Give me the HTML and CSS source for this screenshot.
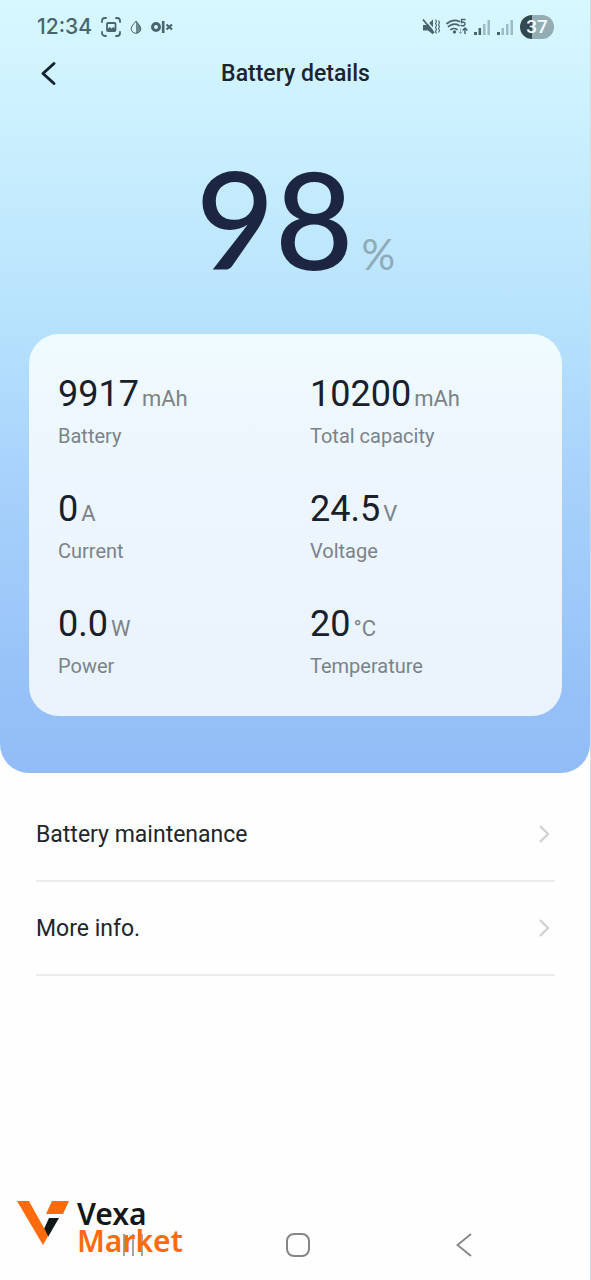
FILE: index.html
```html
<!DOCTYPE html>
<html lang="en">
<head>
<meta charset="utf-8">
<meta name="viewport" content="width=device-width, initial-scale=1">
<title>Battery details</title>
<link rel="stylesheet" href="styles.css">
</head>
<body>
<div class="screen">
  <section class="hero">
    <div class="status">
      <div class="status-group status-left">
        <span class="clock">12:34</span>
        <svg width="20" height="20" viewBox="0 0 20 20" fill="none" stroke="currentColor" stroke-width="1.800" stroke-linecap="round">
          <path d="M1 5V4a3 3 0 0 1 3-3h1M15 1h1a3 3 0 0 1 3 3v1M19 15v1a3 3 0 0 1-3 3h-1M5 19H4a3 3 0 0 1-3-3v-1"/>
          <rect x="6" y="6" width="8.500" height="8" rx="1"/>
          <path d="M6 13l2.500-3 2 1.500L12.500 10l2 2v2H6z" fill="currentColor" stroke="none"/>
        </svg>
        <svg width="12" height="14" viewBox="0 0 12 14">
          <path d="M6 1C8 4 10.800 6 10.800 8.800A4.800 4.500 0 0 1 1.200 8.800C1.200 6 4 4 6 1z" fill="none" stroke="currentColor" stroke-width="1"/>
          <path d="M6 1C8 4 10.800 6 10.800 8.800A4.800 4.500 0 0 1 6 13.300z" fill="currentColor" opacity=".75"/>
        </svg>
        <svg width="22" height="14" viewBox="0 0 22 14" fill="none" stroke="currentColor">
          <circle cx="5" cy="7" r="3.500" stroke-width="3"/>
          <path d="M12.200 1v12" stroke-width="2.600"/>
          <path d="M15.500 4.500l5.500 5M21 4.500l-5.500 5" stroke-width="2.200"/>
        </svg>
      </div>
      <div class="status-group status-right">
        <svg width="18" height="18" viewBox="0 0 18 18" fill="none" stroke="currentColor">
          <path d="M1 7h4l6-5.500v15L6 12.500H1z" fill="currentColor" stroke="none"/>
          <path d="M2.500 0.500l10 12" stroke="#d6f7fe" stroke-width="1.600"/>
          <path d="M1 1.500l11 13.500" stroke-width="1.800"/>
          <path d="M13.500 1.500l1 2-1 2 1 2-1 2 1 2-1 2 1 2M16.500 2.500l1 2-1 2 1 2-1 2 1 2-1 2" stroke-width="1.100"/>
        </svg>
        <svg width="22" height="18" viewBox="0 0 22 18" fill="none" stroke="currentColor" stroke-width="1.700" stroke-linecap="round">
          <path d="M1 5.500Q7 .5 13.500 3.500M2.500 8.500Q8 4.500 13 7.500M5 11.500q3-2 6 0"/>
          <circle cx="8.500" cy="14" r=".8" fill="currentColor"/>
          <path d="M19 1.500h-3.500v3q3.500-.8 3.500 1.500T15 7.500" stroke-width="1.400"/>
          <path d="M19 15.500V10.500M17 12l2-2 2 2" stroke-width="1.500"/>
          <path d="M14.500 11v4M13 14l1.500 1.500L16 14" stroke-width="1" opacity=".5"/>
        </svg>
        <svg width="17" height="17" viewBox="0 0 17 17" fill="currentColor">
          <path d="M0 13h3v3H0zM4.500 9h2.600v7H4.500z"/><path d="M9 5h2.500v11H9zM13.500 1H16v15h-2.500z" opacity=".4"/>
        </svg>
        <svg width="17" height="17" viewBox="0 0 17 17" fill="currentColor">
          <path d="M0 13h3v3H0z"/><path d="M4.500 9H7v7H4.500zM9 5h2.500v11H9zM13.500 1H16v15h-2.500z" opacity=".4"/>
        </svg>
        <span class="charge">37</span>
      </div>
    </div>
    <header class="titlebar">
      <button class="back" type="button" aria-label="Back">
        <svg width="18" height="26" viewBox="0 0 18 26" fill="none" stroke="currentColor" stroke-width="3" stroke-linecap="round" stroke-linejoin="round"><path d="M15 2.500L4 12.500l11 10"/></svg>
      </button>
      <h1 class="title">Battery details</h1>
    </header>
    <div class="level"><span class="level-value">98</span><span class="level-unit">%</span></div>
    <dl class="card">
      <div class="stat"><dd class="reading">9917<span class="unit">mAh</span></dd><dt class="name">Battery</dt></div>
      <div class="stat"><dd class="reading">10200<span class="unit">mAh</span></dd><dt class="name">Total capacity</dt></div>
      <div class="stat"><dd class="reading">0<span class="unit">A</span></dd><dt class="name">Current</dt></div>
      <div class="stat"><dd class="reading">24.5<span class="unit">V</span></dd><dt class="name">Voltage</dt></div>
      <div class="stat"><dd class="reading">0.0<span class="unit">W</span></dd><dt class="name">Power</dt></div>
      <div class="stat"><dd class="reading">20<span class="unit">°C</span></dd><dt class="name">Temperature</dt></div>
    </dl>
  </section>
  <main class="menu">
    <a class="row" href="#maintenance">Battery maintenance
      <svg width="14" height="18" viewBox="0 0 14 18" fill="none" stroke="#d2d2d2" stroke-width="2.400"><path d="M3 1l8 8-8 8"/></svg>
    </a>
    <a class="row" href="#info">More info.
      <svg width="14" height="18" viewBox="0 0 14 18" fill="none" stroke="#d2d2d2" stroke-width="2.400"><path d="M3 1l8 8-8 8"/></svg>
    </a>
  </main>
  <nav class="nav">
    <button type="button" aria-label="Recent apps"><svg width="26" height="26" viewBox="0 0 26 26" fill="none" stroke="currentColor" stroke-width="1.500"><path d="M4 2v22M13 2v22M22 2v22"/></svg></button>
    <button type="button" aria-label="Home"><svg width="26" height="26" viewBox="0 0 26 26" fill="none" stroke="currentColor" stroke-width="2"><rect x="2" y="2" width="22" height="22" rx="7"/></svg></button>
    <button type="button" aria-label="Back"><svg width="26" height="26" viewBox="0 0 26 26" fill="none" stroke="currentColor" stroke-width="1.800"><path d="M20 2L6.500 13 20 24"/></svg></button>
  </nav>
  <div class="brand">
    <svg width="52" height="46" viewBox="0 0 52 46">
      <path d="M32 18h10L31 37l-4-8z" fill="#111817"/>
      <path d="M0 1h12l16 29 3 6-5 9z" fill="#ff6b0a"/>
      <path d="M35 1h17l-6 13H29z" fill="#ff6b0a"/>
    </svg>
    <div class="brand-text"><span>Vexa</span><span class="brand-accent">Market</span></div>
  </div>
</div>
</body>
</html>
```
FILE: styles.css
```css
* { box-sizing: border-box; }
body {
  margin: 0;
  background: #fefefe;
  color: #1c2430;
  font-family: Roboto, "Liberation Sans", sans-serif;
}
button {
  border: 0;
  padding: 0;
  background: none;
  color: inherit;
}
svg { display: block; flex: none; }
.screen {
  position: relative;
  min-height: 100vh;
  display: flex;
  flex-direction: column;
  border-right: 1px solid #d4dadd;
}
.hero {
  padding: 13px 28px 57px 29px;
  border-radius: 0 0 29px 29px;
  background: linear-gradient(#d7f8ff 0, #cdf1fe 14%, #b9e4fd 39%, #a9d3fb 60%, #97c2f8 88%, #91bcf6 100%);
}
.status {
  display: flex;
  justify-content: space-between;
  height: 28px;
  padding: 0 8px;
  color: #49656b;
}
.status-group { display: flex; align-items: center; }
.status-left { gap: 9px; }
.status-right { gap: 6px; }
.clock {
  font: 500 21px/28px Inter, sans-serif;
}
.charge {
  width: 34px;
  border-radius: 12px;
  background: linear-gradient(90deg, #34494f 36%, #94adb3 36%);
  color: #f4fdff;
  font: 500 19px/24px Roboto, sans-serif;
  text-align: center;
}
.titlebar {
  display: grid;
  grid-template-columns: 40px 1fr 40px;
  align-items: center;
  height: 66px;
}
.back { padding-left: 10px; color: #142331; }
.title {
  margin: 0;
  font-size: 23px;
  font-weight: 500;
  line-height: 28px;
  text-align: center;
}
.level {
  display: flex;
  justify-content: center;
  align-items: baseline;
  gap: 8px;
  padding: 27px 0 32px;
  font-family: Lato, sans-serif;
}
.level-value {
  color: #1c2542;
  font-size: 136px;
  font-weight: 500;
  line-height: 168px;
}
.level-unit { color: #8fabb9; font-size: 42px; line-height: 48px; }
.card {
  display: grid;
  grid-template-columns: 252px 1fr;
  row-gap: 37px;
  margin: 0;
  padding: 38px 29px 36px;
  border-radius: 30px;
  background: linear-gradient(#effbfd, #eef7fe 20%, #eaf3fd);
}
.reading {
  margin: 0;
  color: #17202b;
  font: 400 36px/44px Roboto, sans-serif;
}
.unit { margin-left: 3px; color: #7b8388; font-size: 22px; line-height: 24px; }
.name { margin-top: 6px; color: #7b8388; font-size: 20px; line-height: 28px; }
.menu { flex: 1; padding: 15px 35px 0 36px; }
.row {
  display: flex;
  justify-content: space-between;
  align-items: center;
  height: 94px;
  padding-right: 4px;
  border-bottom: 2px solid #ececec;
  color: #20262b;
  font-size: 23px;
  text-decoration: none;
}
.nav {
  display: flex;
  justify-content: space-around;
  height: 48px;
  padding: 0 43px 0 50px;
  color: #858585;
}
.nav button { display: flex; justify-content: center; align-items: center; width: 48px; height: 26px; }
.brand {
  position: absolute;
  left: 17px;
  bottom: 26px;
  display: flex;
  align-items: flex-start;
  gap: 8px;
}
.brand-text {
  display: flex;
  flex-direction: column;
  color: #111817;
  font: 600 30px/27px "Noto Sans", sans-serif;
}
.brand-accent { color: #ff6b0a; }
```
